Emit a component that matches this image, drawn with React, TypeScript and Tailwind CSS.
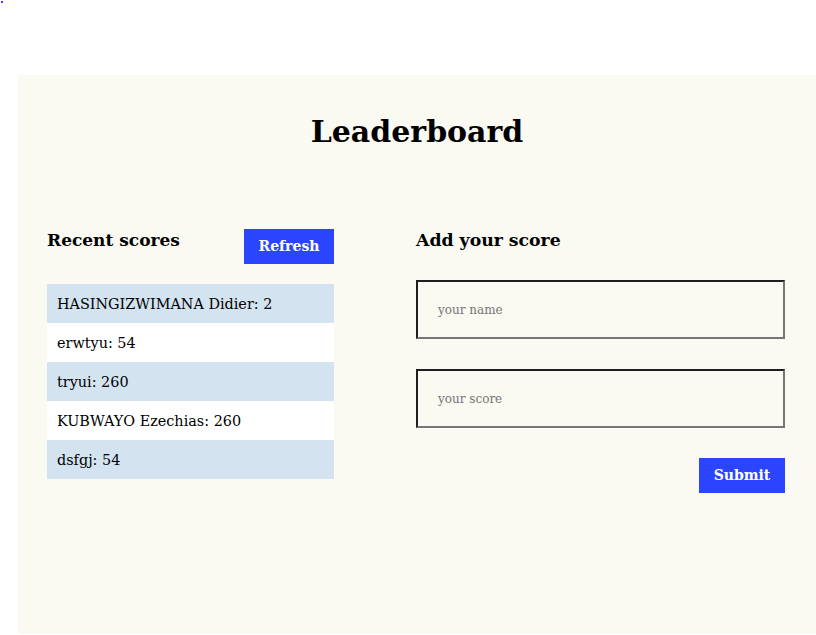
const scores = [
  { name: 'HASINGIZWIMANA Didier', score: 2 },
  { name: 'erwtyu', score: 54 },
  { name: 'tryui', score: 260 },
  { name: 'KUBWAYO Ezechias', score: 260 },
  { name: 'dsfgj', score: 54 },
]

const App = () => {
  return (
    <div className="min-h-screen bg-white font-['DejaVu_Serif',serif] text-black">
      <div className="h-[75px] pt-px pl-px">
        <div className="h-[2px] w-[2px] bg-[#3b3bff]"></div>
      </div>
      <main className="ml-[18px] h-[559px] bg-[#faf9f2] pt-9">
        <h1 className="pt-px text-center text-[30px] font-bold leading-[40px]">Leaderboard</h1>
        <div className="mt-[76px] flex pl-[29px] pr-[31px]">
          <section className="w-[287px]">
            <div className="flex items-start justify-between">
              <h3 className="text-[17px] font-bold leading-6">Recent scores</h3>
              <button
                type="button"
                className="mt-px h-[35px] w-[90px] bg-[#2b45ff] text-[14px] font-bold text-white"
              >
                Refresh
              </button>
            </div>
            <ul className="mt-5">
              {scores.map((s, i) => (
                <li
                  key={i}
                  className={`flex h-[39px] items-center pl-[10px] pt-[2px] text-[14.4px] ${i % 2 === 0 ? 'bg-[#d3e3f0]' : 'bg-white'}`}
                >
                  {s.name}: {s.score}
                </li>
              ))}
            </ul>
          </section>
          <section className="ml-[82px] w-[369px]">
            <h3 className="text-[17.3px] font-bold leading-6">Add your score</h3>
            <form className="mt-7 flex flex-col" onSubmit={(e) => e.preventDefault()}>
              <input
                type="text"
                placeholder="your name"
                className="h-[59px] border-2 border-t-[#1e1e1e] border-l-[#1e1e1e] border-b-[#767676] border-r-[#767676] bg-transparent px-5 text-[12px] placeholder:text-[#757575]"
              />
              <input
                type="number"
                placeholder="your score"
                className="mt-[30px] h-[59px] border-2 border-t-[#1e1e1e] border-l-[#1e1e1e] border-b-[#767676] border-r-[#767676] bg-transparent px-5 text-[12px] placeholder:text-[#757575]"
              />
              <button
                type="submit"
                className="mt-[30px] h-[35px] w-[86px] self-end bg-[#2b45ff] text-[14px] font-bold text-white"
              >
                Submit
              </button>
            </form>
          </section>
        </div>
      </main>
    </div>
  )
}

export default App
